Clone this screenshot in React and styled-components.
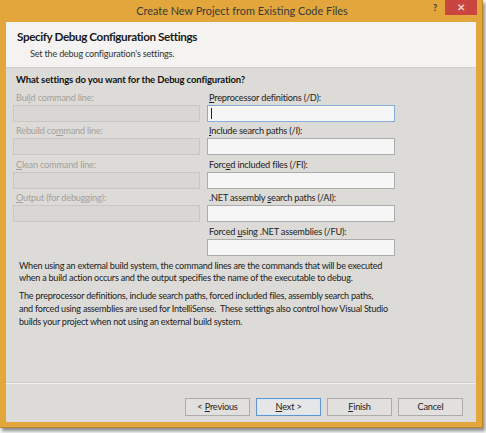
import React from "react";
import styled, { createGlobalStyle } from "styled-components";

const Global = createGlobalStyle`
  html, body { margin: 0; padding: 0; background: #f4f4f4; }
  body { width: 486px; height: 433px; overflow: hidden; font-family: Lato, "Noto Sans", sans-serif; }
`;

const Window = styled.div`
  width: 470px;
  height: 422px;
  background: #e2a63c;
  border-right: 1px solid #b9862c;
  border-bottom: 1px solid #b9862c;
  padding: 0 6px 5px 6px;
  display: flex;
  flex-direction: column;
  box-shadow: 2px 3px 3px rgba(60, 60, 60, 0.55);
`;

const TitleBar = styled.div`
  height: 22px;
  display: grid;
  grid-template-columns: 1fr auto 1fr;
  align-items: start;
`;

const Title = styled.div`
  grid-column: 2;
  font-size: 10.9px;
  line-height: 22px;
  color: #3a3a3a;
  white-space: nowrap;
  padding-left: 2px;
`;

const Controls = styled.div`
  grid-column: 3;
  justify-self: end;
  display: flex;
  align-items: flex-start;
  margin-right: -1px;
`;

const Help = styled.div`
  font-size: 9px;
  font-weight: bold;
  color: #3a3a3a;
  line-height: 16px;
  width: 14px;
  margin-right: 3px;
  text-align: center;
`;

const Close = styled.div`
  width: 32px;
  height: 15px;
  background: #c8463f;
  color: #f1d0cd;
  font-size: 10px;
  font-weight: bold;
  text-align: center;
  line-height: 15px;
`;

const Client = styled.div`
  flex: 1;
  display: flex;
  flex-direction: column;
  background: #dddbd7;
`;

const Header = styled.div`
  height: 46px;
  background: #f4f3f1;
  border-bottom: 1px solid #d0cecb;
  padding: 7px 0 0 11px;
  box-sizing: border-box;
`;

const HeaderTitle = styled.div`
  font-weight: bold;
  font-size: 11.7px;
  letter-spacing: -0.4px;
  line-height: 15px;
  color: #1a1a1a;
`;

const HeaderSub = styled.div`
  font-size: 9.1px;
  letter-spacing: -0.2px;
  line-height: 14px;
  color: #333;
  margin: 3px 0 0 13px;
`;

const Body = styled.div`
  flex: 1;
  padding: 5px 10px 0 9px;
  display: flex;
  flex-direction: column;
`;

const Question = styled.div`
  font-weight: bold;
  font-size: 9.5px;
  letter-spacing: -0.15px;
  line-height: 14px;
  color: #111;
  margin-left: 1px;
`;

const Grid = styled.div`
  display: grid;
  grid-template-columns: 187px 188px;
  column-gap: 7px;
  row-gap: 1.5px;
  margin-top: 2.5px;
  margin-left: -2px;
  grid-auto-flow: column;
  grid-template-rows: repeat(5, auto);
`;

const Field = styled.div`
  display: flex;
  flex-direction: column;
`;

const Label = styled.div`
  font-size: 9.2px;
  letter-spacing: -0.2px;
  line-height: 15px;
  color: ${(p) => (p.$disabled ? "#a3a19c" : "#222")};
  padding-left: ${(p) => (p.$disabled ? "3px" : "2px")};
  white-space: nowrap;
  u { text-decoration: underline; text-underline-offset: 1px; }
`;

const Input = styled.div`
  height: 17px;
  box-sizing: border-box;
  border: 1px solid ${(p) => (p.$focused ? "#86aedb" : p.$disabled ? "#c9c7c3" : "#acacac")};
  background: ${(p) => (p.$disabled ? "#d9d7d3" : "#f6f6f6")};
  position: relative;
`;

const Caret = styled.span`
  position: absolute;
  left: 3px;
  top: 2px;
  width: 1px;
  height: 11px;
  background: #222;
`;

const Text = styled.p`
  margin: ${(p) => p.$mt} 0 0 4px;
  font-size: 9.1px;
  letter-spacing: -0.25px;
  line-height: 12.8px;
  color: #222;
  white-space: nowrap;
`;

const Footer = styled.div`
  border-top: 1px solid #f1f0ee;
  box-shadow: 0 -1px 0 #cfcdc9;
  display: flex;
  justify-content: flex-end;
  gap: 6px;
  padding: 14px 13px 6px 0;
`;

const Button = styled.div`
  width: 65px;
  height: 18px;
  box-sizing: border-box;
  border: 1px solid ${(p) => (p.$default ? "#5f97cc" : "#acacac")};
  background: ${(p) => (p.$default ? "#e4e6e8" : "#e1e0de")};
  box-shadow: ${(p) => (p.$default ? "inset 0 0 0 1px #d6e6f5" : "none")};
  font-size: 9.2px;
  letter-spacing: -0.2px;
  line-height: 16px;
  text-align: center;
  color: #222;
`;

const leftFields = [
  ["Bui", "l", "d command line:"],
  ["Rebuild co", "m", "mand line:"],
  ["", "C", "lean command line:"],
  ["", "O", "utput (for debugging):"],
];

const rightFields = [
  ["", "P", "reprocessor definitions (/D):"],
  ["", "I", "nclude search paths (/I):"],
  ["Forc", "e", "d included files (/FI):"],
  [".NET assembly ", "s", "earch paths (/AI):"],
  ["Forced ", "u", "sing .NET assemblies (/FU):"],
];

const Mn = ({ parts }) => (
  <>
    {parts[0]}
    <u>{parts[1]}</u>
    {parts[2]}
  </>
);

export default function App() {
  return (
    <>
      <Global />
      <Window>
        <TitleBar>
          <Title>Create New Project from Existing Code Files</Title>
          <Controls>
            <Help>?</Help>
            <Close>✕</Close>
          </Controls>
        </TitleBar>
        <Client>
          <Header>
            <HeaderTitle>Specify Debug Configuration Settings</HeaderTitle>
            <HeaderSub>Set the debug configuration's settings.</HeaderSub>
          </Header>
          <Body>
            <Question>What settings do you want for the Debug configuration?</Question>
            <Grid>
              {leftFields.map((f, i) => (
                <Field key={"l" + i}>
                  <Label $disabled>
                    <Mn parts={f} />
                  </Label>
                  <Input $disabled />
                </Field>
              ))}
              <Field />
              {rightFields.map((f, i) => (
                <Field key={"r" + i}>
                  <Label>
                    <Mn parts={f} />
                  </Label>
                  <Input $focused={i === 0}>{i === 0 && <Caret />}</Input>
                </Field>
              ))}
            </Grid>
            <Text $mt="4px">
              When using an external build system, the command lines are the commands that will be executed
              <br />
              when a build action occurs and the output specifies the name of the executable to debug.
            </Text>
            <Text $mt="5px">
              The preprocessor definitions, include search paths, forced included files, assembly search paths,
              <br />
              and forced using assemblies are used for IntelliSense.&nbsp; These settings also control how Visual Studio
              <br />
              builds your project when not using an external build system.
            </Text>
          </Body>
          <Footer>
            <Button>
              &lt; <u>P</u>revious
            </Button>
            <Button $default>
              <u>N</u>ext &gt;
            </Button>
            <Button>
              <u>F</u>inish
            </Button>
            <Button>Cancel</Button>
          </Footer>
        </Client>
      </Window>
    </>
  );
}
